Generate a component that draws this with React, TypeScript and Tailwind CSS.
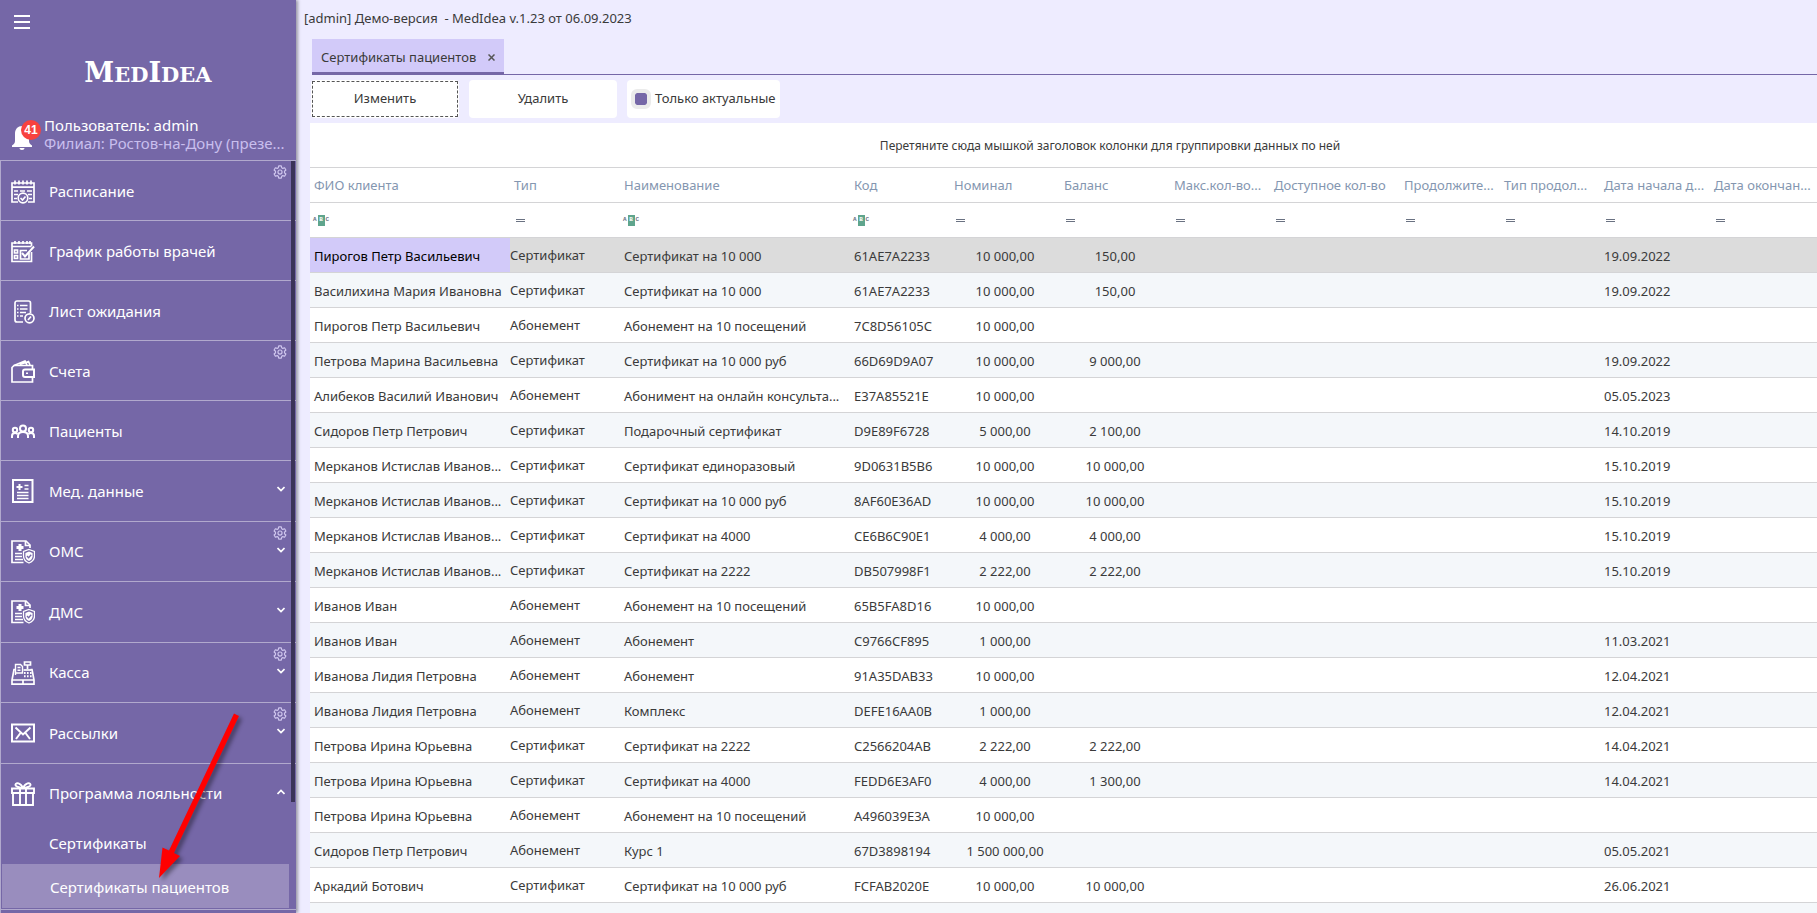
import React from 'react';

type IconProps = { className?: string };

const strokeProps = {
  viewBox: '0 0 24 24',
  fill: 'none',
  stroke: 'currentColor',
  strokeWidth: 1.7,
  'aria-hidden': true
};

function CalendarIcon({ className }: IconProps) {
  return (
    <svg className={className} {...strokeProps}>
      <path d="M7 22H1V3h22v19h-6M1 7.2h22" />
      <path d="M4 .5v4M8 .5v4M12 .5v4M16 .5v4M20 .5v4" />
      <path d="M3 11h4M9 11h5M16 11h5M3 14.5h4M17 14.5h4M3 18.5h3M18 18.5h3" />
      <circle cx="12" cy="18" r="4.8" />
      <path d="M9.5 18l2 2 3-3.5" />
    </svg>
  );
}

function ScheduleIcon({ className }: IconProps) {
  return (
    <svg className={className} {...strokeProps}>
      <path d="M20.5 12v9.5H1V3h19.5v3M1 6.5h19.5" />
      <path d="M4 1v3M8 1v3M12 1v3M16 1v3M19 1v3" />
      <path d="M3.5 10h3v3h-3zM3.5 15.500h3v3h-3z" />
      <path d="M18 13v6H9.5v-8.5H16" />
      <path d="M11 13l3 3.500L23 6.500" strokeWidth="2" />
    </svg>
  );
}

function WaitListIcon({ className }: IconProps) {
  return (
    <svg className={className} {...strokeProps}>
      <path d="M12 22H6a2 2 0 0 1-2-2V3a2 2 0 0 1 2-2h11.5a2 2 0 0 1 2 2v10" />
      <path d="M6 5.500h1.500M6 9h1.500M6 12.500h1.500M6 16h1.500M9 5.500h7.500M9 9h7.500M9 12.500h6M9 16h3" />
      <circle cx="18.5" cy="18.3" r="4.5" />
      <path d="M17 20l3-3.500" />
    </svg>
  );
}

function WalletIcon({ className }: IconProps) {
  return (
    <svg className={className} {...strokeProps}>
      <path d="M21.5 9V5.500H3L1 7.500V22h20.500v-4.500" />
      <path d="M3 5.500L14 1l2 4M9 4.500L17.500 1.500 19 5" />
      <path d="M23 9.500H14a2 2 0 0 0-2 2V15a2 2 0 0 0 2 2h9z" strokeWidth="2" />
      <path d="M15 12.500h2v1.500h-2z" fill="currentColor" stroke="none" />
    </svg>
  );
}

function PeopleIcon({ className }: IconProps) {
  return (
    <svg className={className} {...strokeProps} strokeWidth="2">
      <circle cx="12" cy="8.5" r="3" />
      <path d="M7 18v-2c0-2.500 2-4 5-4s5 1.500 5 4v2" />
      <circle cx="4" cy="10" r="2.2" />
      <circle cx="20" cy="10" r="2.2" />
      <path d="M1 18v-2c0-2 1-3 3-3 1.200 0 2 .4 2.500 1M23 18v-2c0-2-1-3-3-3-1.200 0-2 .4-2.500 1" />
    </svg>
  );
}

function MedDataIcon({ className }: IconProps) {
  return (
    <svg className={className} {...strokeProps}>
      <path d="M2 1h19.500v22H2z" strokeWidth="2" />
      <path d="M8.500 5v6M5.500 8h6" strokeWidth="2" />
      <path d="M13.500 6.500h4M13.500 10h4M6 13.500h11.500M6 16.500h11.500M6 19.500h11.500" />
    </svg>
  );
}

function InsuranceIcon({ className }: IconProps) {
  return (
    <svg className={className} {...strokeProps}>
      <path d="M12.500 22.500H1V1h14l4 4v3" />
      <path d="M14.500 1v4.500H19" />
      <path d="M9 4v7M5.500 7.500h7" strokeWidth="3" />
      <path d="M4 13.500h7M4 16.500h7M4 19.500h8" />
      <path d="M18 9.500l5.500 2v4.500c0 3.500-2.500 5.800-5.500 7-3-1.200-5.500-3.500-5.500-7v-4.500z" strokeWidth="1.300" />
      <path d="M18 11.500l3.600 1.400v3.300c0 2.400-1.500 3.800-3.600 4.800-2.100-1-3.600-2.400-3.600-4.800v-3.300z" fill="currentColor" stroke="none" />
      <path d="M16 16l1.600 1.700 2.600-3" stroke="#7567a7" strokeWidth="1.300" />
    </svg>
  );
}

function CashIcon({ className }: IconProps) {
  return (
    <svg className={className} {...strokeProps}>
      <path d="M4 8.500H3L1 19v4.200h22V19L21 8.500h-1.500M1 19h22M12 19v4" />
      <path d="M4.500 14V3.500h5l2 2V12H5M6.500 6.500h3M6.500 9.200h3" strokeWidth="1.400" />
      <path d="M13.500 1h6v3h-6zM16.500 4v4" />
      <path d="M12.500 9h8" />
      <path d="M13 12h1.600M16 12h1.600M19 12h1.600M13 15.300h1.600M16 15.300h1.600M19 15.300h1.600" strokeWidth="2" />
    </svg>
  );
}

function MailIcon({ className }: IconProps) {
  return (
    <svg className={className} {...strokeProps} strokeWidth="2">
      <path d="M1 3.500h22v17H1z" />
      <path d="M4.500 6.500l7.500 7 7.500-7M5 18l4.500-6M19 18l-4.500-6" />
    </svg>
  );
}

function GiftIcon({ className }: IconProps) {
  return (
    <svg className={className} {...strokeProps} strokeWidth="1.900">
      <path d="M1 6.500h22V11H1zM2 11h20v12H2zM9 6.500V23M15 6.500V23" />
      <path d="M12 6C9 6 4 4.500 4.500 2.500 5 .3 9.500.5 12 6zM12 6c3 0 8-1.500 7.500-3.500C19 .3 14.500.5 12 6z" />
    </svg>
  );
}

function GearIcon({ className }: IconProps) {
  return (
    <svg className={className} {...strokeProps} strokeLinejoin="round" strokeWidth="2">
      <path d="M9.800 1.500h4.400l.7 3.200 1.900 1.100 3.100-1 2.200 3.800-2.400 2.200v2.400l2.400 2.200-2.200 3.800-3.100-1-1.900 1.100-.7 3.200H9.800l-.7-3.200-1.900-1.100-3.100 1-2.200-3.800 2.400-2.200v-2.400L1.900 8.600l2.200-3.800 3.100 1 1.900-1.100z" />
      <circle cx="12" cy="12" r="3.5" />
    </svg>
  );
}

function ChevronIcon({ className }: IconProps) {
  return (
    <svg className={className} viewBox="0 0 8 8" fill="none" stroke="currentColor" strokeWidth="1.700" aria-hidden="true">
      <path d="M.5 2l3.500 3.500L7.500 2" />
    </svg>
  );
}

function BellIcon({ className }: IconProps) {
  return (
    <svg className={className} viewBox="0 0 20 24" fill="currentColor" aria-hidden="true">
      <path d="M10 0c-4 0-7 3-7 7.500V15c0 2-1 3-3 4.500V21h20v-1.500c-2-1.500-3-2.500-3-4.500V7.500C17 3 14 0 10 0zM7.500 22h5c0 1.300-1 2-2.500 2s-2.500-.7-2.500-2z" />
    </svg>
  );
}

const menu = [
  { label: 'Расписание', icon: CalendarIcon, gear: true },
  { label: 'График работы врачей', icon: ScheduleIcon },
  { label: 'Лист ожидания', icon: WaitListIcon },
  { label: 'Счета', icon: WalletIcon, gear: true },
  { label: 'Пациенты', icon: PeopleIcon },
  { label: 'Мед. данные', icon: MedDataIcon, expandable: true, tall: true },
  { label: 'ОМС', icon: InsuranceIcon, expandable: true, gear: true },
  { label: 'ДМС', icon: InsuranceIcon, expandable: true, tall: true },
  { label: 'Касса', icon: CashIcon, expandable: true, gear: true },
  { label: 'Рассылки', icon: MailIcon, expandable: true, gear: true, tall: true },
  { label: 'Программа лояльности', icon: GiftIcon, expandable: true, open: true }
];

const columns = [
  { title: 'ФИО клиента', width: 'w-[200px]', filter: 'text' },
  { title: 'Тип', width: 'w-[110px]', filter: 'equal' },
  { title: 'Наименование', width: 'w-[230px]', filter: 'text' },
  { title: 'Код', width: 'w-[100px]', filter: 'text' },
  { title: 'Номинал', width: 'w-[110px]', filter: 'equal' },
  { title: 'Баланс', width: 'w-[110px]', filter: 'equal' },
  { title: 'Макс.кол-во...', width: 'w-[100px]', filter: 'equal' },
  { title: 'Доступное кол-во', width: 'w-[130px]', filter: 'equal' },
  { title: 'Продолжите...', width: 'w-[100px]', filter: 'equal' },
  { title: 'Тип продол...', width: 'w-[100px]', filter: 'equal' },
  { title: 'Дата начала д...', width: 'w-[110px]', filter: 'equal' },
  { title: 'Дата окончан...', width: '', filter: 'equal' }
];

// name, type, title, code, nominal, balance, start date
const rows = [
  ['Пирогов Петр Васильевич', 'Сертификат', 'Сертификат на 10 000', '61AE7A2233', '10 000,00', '150,00', '19.09.2022'],
  ['Василихина Мария Ивановна', 'Сертификат', 'Сертификат на 10 000', '61AE7A2233', '10 000,00', '150,00', '19.09.2022'],
  ['Пирогов Петр Васильевич', 'Абонемент', 'Абонемент на 10 посещений', '7C8D56105C', '10 000,00', '', ''],
  ['Петрова Марина Васильевна', 'Сертификат', 'Сертификат на 10 000 руб', '66D69D9A07', '10 000,00', '9 000,00', '19.09.2022'],
  ['Алибеков Василий Иванович', 'Абонемент', 'Абонимент на онлайн консульта...', 'E37A85521E', '10 000,00', '', '05.05.2023'],
  ['Сидоров Петр Петрович', 'Сертификат', 'Подарочный сертификат', 'D9E89F6728', '5 000,00', '2 100,00', '14.10.2019'],
  ['Мерканов Истислав Иванов...', 'Сертификат', 'Сертификат единоразовый', '9D0631B5B6', '10 000,00', '10 000,00', '15.10.2019'],
  ['Мерканов Истислав Иванов...', 'Сертификат', 'Сертификат на 10 000 руб', '8AF60E36AD', '10 000,00', '10 000,00', '15.10.2019'],
  ['Мерканов Истислав Иванов...', 'Сертификат', 'Сертификат на 4000', 'CE6B6C90E1', '4 000,00', '4 000,00', '15.10.2019'],
  ['Мерканов Истислав Иванов...', 'Сертификат', 'Сертификат на 2222', 'DB507998F1', '2 222,00', '2 222,00', '15.10.2019'],
  ['Иванов Иван', 'Абонемент', 'Абонемент на 10 посещений', '65B5FA8D16', '10 000,00', '', ''],
  ['Иванов Иван', 'Абонемент', 'Абонемент', 'C9766CF895', '1 000,00', '', '11.03.2021'],
  ['Иванова Лидия Петровна', 'Абонемент', 'Абонемент', '91A35DAB33', '10 000,00', '', '12.04.2021'],
  ['Иванова Лидия Петровна', 'Абонемент', 'Комплекс', 'DEFE16AA0B', '1 000,00', '', '12.04.2021'],
  ['Петрова Ирина Юрьевна', 'Сертификат', 'Сертификат на 2222', 'C2566204AB', '2 222,00', '2 222,00', '14.04.2021'],
  ['Петрова Ирина Юрьевна', 'Сертификат', 'Сертификат на 4000', 'FEDD6E3AF0', '4 000,00', '1 300,00', '14.04.2021'],
  ['Петрова Ирина Юрьевна', 'Абонемент', 'Абонемент на 10 посещений', 'A496039E3A', '10 000,00', '', ''],
  ['Сидоров Петр Петрович', 'Абонемент', 'Курс 1', '67D3898194', '1 500 000,00', '', '05.05.2021'],
  ['Аркадий Ботович', 'Сертификат', 'Сертификат на 10 000 руб', 'FCFAB2020E', '10 000,00', '10 000,00', '26.06.2021'],
  ['', '', '', '', '', '', '']
];

function Sidebar() {
  return (
    <aside className="relative z-10 flex w-[296px] shrink-0 flex-col bg-[#7567a7] text-white shadow-[2px_0_3px_rgba(0,0,0,0.35)]">
      <div className="flex h-40 shrink-0 flex-col">
        <button type="button" aria-label="Меню" className="ml-3.5 mt-[15px] flex w-4 flex-col gap-1">
          <span className="h-0.5 bg-white"></span>
          <span className="h-0.5 bg-white"></span>
          <span className="h-0.5 bg-white"></span>
        </button>
        <div className="mt-7 text-center font-['DejaVu_Serif'] text-[21px] leading-8 font-bold">
          <span className="text-[27px]">M</span>ED<span className="text-[27px]">I</span>DEA
        </div>
        <div className="mt-auto mb-2 flex items-center">
          <button type="button" aria-label="Уведомления" className="relative ml-3 mt-2 w-8 shrink-0">
            <BellIcon className="h-6 w-5" />
            <span className="absolute -top-1.5 left-[9px] flex size-5 items-center justify-center rounded-full bg-[#f8423f] font-['Liberation_Sans'] text-[12px] font-bold">41</span>
          </button>
          <div className="min-w-0 text-[15px] leading-[18px]">
            <div>Пользователь: admin</div>
            <div className="text-[#c9bfee]">Филиал: Ростов-на-Дону (презе...</div>
          </div>
        </div>
      </div>

      {/* Menu */}
      <nav className="relative min-h-0 flex-1 overflow-hidden border-l border-[#b1a9cd] text-[15px]">
        {menu.map((item) => (
          <button
            key={item.label}
            type="button"
            className={`relative flex w-full items-center border-t border-[#b1a9cd] pl-2.5 text-left ${item.tall ? 'h-[61px]' : 'h-[60px]'} ${item.expandable ? '' : 'pt-0.5'}`}
          >
            <item.icon className="size-6 shrink-0" />
            <span className="ml-3.5">{item.label}</span>
            {item.gear && <GearIcon className="absolute top-1 right-[9px] size-3.5 text-[#cfc6ee]" />}
            {item.expandable && (
              <ChevronIcon className={`absolute top-6 right-[11px] size-2 ${item.open ? 'rotate-180' : ''}`} />
            )}
          </button>
        ))}
        <a href="#certificates" className="flex h-[41px] items-center pl-12">Сертификаты</a>
        <a href="#patient-certificates" className="mr-[7px] ml-px flex h-11 items-center bg-[#998dbe] pt-0.5 pl-12">
          Сертификаты пациентов
        </a>
        <div className="mt-px border-t border-[#b1a9cd]"></div>
        <div className="absolute top-px right-px h-[641px] w-1 bg-[#3b3358]"></div>
      </nav>

      {/* Pointer to the current section */}
      <svg className="pointer-events-none absolute top-[705px] left-[150px] h-[185px] w-[100px] drop-shadow-[3px_3px_2px_rgba(0,0,0,0.4)]" viewBox="0 0 100 185" aria-hidden="true">
        <path d="M84 8.500l5 2.500-65 137 6 3L9 173l3.500-30.500 6.500 3z" fill="#ff0000" />
      </svg>
    </aside>
  );
}

function FilterMark({ kind }: { kind: string }) {
  if (kind === 'text') {
    return (
      <button type="button" className="flex items-center gap-px font-['Liberation_Mono'] text-[6px] leading-none font-bold text-gray-500">
        A<span className="flex h-[11px] w-[7px] items-center justify-center bg-[#5fa58d] text-white">B</span>C
      </button>
    );
  }
  return (
    <button type="button" aria-label="Равно" className="ml-[3px] block h-[3px] w-[9px] border-y border-gray-500"></button>
  );
}

export default function App() {
  return (
    <div className="flex h-screen overflow-hidden bg-[#eeecff] font-['Noto_Sans',sans-serif] text-[13px] text-[#3a3a3a]">
      <Sidebar />

      <main className="flex min-w-0 flex-1 flex-col">
        <h1 className="h-[39px] shrink-0 pt-1.5 pl-2 leading-6 whitespace-pre">[admin] Демо-версия  - MedIdea v.1.23 от 06.09.2023</h1>

        {/* Tabs */}
        <div className="ml-4 flex h-9 shrink-0 border-b border-[#7567a7]">
          <div className="-mb-px flex items-center gap-3 border-b-3 border-[#7567a7] bg-[#d2caf9] px-[9px] pt-1">
            Сертификаты пациентов
            <button type="button" aria-label="Закрыть">
              <svg className="size-[7px]" viewBox="0 0 7 7" stroke="#555" strokeWidth="1.500" aria-hidden="true">
                <path d="M.5.5l6 6M6.500.5l-6 6" />
              </svg>
            </button>
          </div>
        </div>

        {/* Toolbar */}
        <div className="ml-[15px] flex h-12 shrink-0 items-center gap-2.5">
          <button type="button" className="h-[38px] w-[148px] rounded bg-white p-px">
            <span className="flex h-full items-center justify-center border border-dashed border-[#555]">Изменить</span>
          </button>
          <button type="button" className="h-[38px] w-[148px] rounded bg-white">Удалить</button>
          <label className="flex h-[38px] items-center gap-1 rounded bg-white px-1">
            <input type="checkbox" defaultChecked className="size-5 appearance-none rounded-md border-4 border-[#ebebeb] checked:bg-[#7567a7] bg-clip-padding" />
            Только актуальные
          </label>
        </div>

        {/* Grid */}
        <div className="ml-3.5 min-h-0 flex-1 overflow-hidden bg-white">
          <div className="flex h-[45px] items-center justify-center border-b border-[#d4d4d6] pt-0.5 pl-[93px] text-[12px]">
            Перетяните сюда мышкой заголовок колонки для группировки данных по ней
          </div>
          <table className="w-full table-fixed border-separate border-spacing-0 whitespace-nowrap">
            <thead>
              <tr className="h-[35px]">
                {columns.map((col) => (
                  <th key={col.title} className={`overflow-hidden border-b border-[#d4d4d6] px-1 pt-0.5 text-left font-normal text-[#8496b0] ${col.width}`}>
                    {col.title}
                  </th>
                ))}
              </tr>
              <tr className="h-[35px]">
                {columns.map((col) => (
                  <td key={col.title} className="border-b border-[#d4d4d6] px-[3px]">
                    <FilterMark kind={col.filter} />
                  </td>
                ))}
              </tr>
            </thead>
            <tbody>
              {rows.map((row, index) => (
                <tr key={index} className={`h-[35px] ${index === 0 ? 'bg-[#dcdcdc]' : index % 2 ? 'bg-[#f4f7fa]' : 'bg-white'}`}>
                  <td className={`overflow-hidden border-b border-[#d4d4d6] px-1 pt-[3px] ${index === 0 ? 'bg-[#d2caf9] text-black' : ''}`}>{row[0]}</td>
                  <td className="border-b border-[#d4d4d6] pt-px">{row[1]}</td>
                  <td className="overflow-hidden border-b border-[#d4d4d6] px-1 pt-[3px]">{row[2]}</td>
                  <td className="border-b border-[#d4d4d6] px-1 pt-[3px]">{row[3]}</td>
                  <td className="border-b border-[#d4d4d6] pt-[3px] text-center">{row[4]}</td>
                  <td className="border-b border-[#d4d4d6] pt-[3px] text-center">{row[5]}</td>
                  <td className="border-b border-[#d4d4d6]" colSpan={4}></td>
                  <td className="border-b border-[#d4d4d6] px-1 pt-[3px]">{row[6]}</td>
                  <td className="border-b border-[#d4d4d6]"></td>
                </tr>
              ))}
            </tbody>
          </table>
        </div>
      </main>
    </div>
  );
}
